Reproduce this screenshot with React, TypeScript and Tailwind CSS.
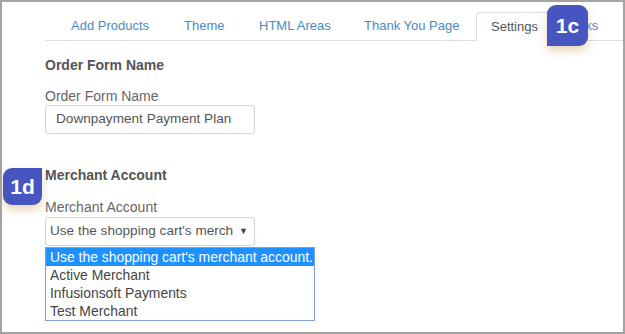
import React from "react";

const tabs: Array<{ label: string; width: string; active?: boolean }> = [
  { label: "Add Products", width: "w-[113px]" },
  { label: "Theme", width: "w-[75px]" },
  { label: "HTML Areas", width: "w-[105px]" },
  { label: "Thank You Page", width: "w-[127px]" },
  { label: "Settings", width: "w-[77px]", active: true },
  { label: "Links", width: "w-[70px]" }
];

const options = [
  "Use the shopping cart's merchant account.",
  "Active Merchant",
  "Infusionsoft Payments",
  "Test Merchant"
];

function Badge({ text, className }: { text: string; className: string }) {
  return (
    <div
      className={`absolute flex items-center justify-center bg-[#4655bf] text-white font-bold text-[21px] shadow-[0_5px_8px_rgba(190,140,60,0.35)] ${className}`}
    >
      {text}
    </div>
  );
}

export default function App() {
  return (
    <div
      className="relative w-[625px] h-[334px] border-2 border-[#a3a3a3] bg-white overflow-hidden"
      style={{ fontFamily: '"Liberation Sans", Arial, sans-serif' }}
    >
      <div className="pl-[43px] pt-[10px]">
        {/* tab strip */}
        <div className="flex h-[29px] border-b border-[#dddddd] pl-[11px]">
          {tabs.map((tab) =>
            tab.active ? (
              <div
                key={tab.label}
                className={`${tab.width} flex-shrink-0 h-[29px] pl-[14px] pt-[4px] text-[13px] text-[#555555] bg-white border border-b-0 border-[#dddddd] rounded-t-[4px]`}
              >
                {tab.label}
              </div>
            ) : (
              <div
                key={tab.label}
                className={`${tab.width} flex-shrink-0 pl-[15px] pt-[4px] text-[13px] text-[#4a8ac6]`}
              >
                {tab.label}
              </div>
            )
          )}
        </div>

        {/* order form name */}
        <div className="mt-[15px] text-[14px] leading-[18px] font-bold text-[#555555]">Order Form Name</div>
        <div className="mt-[14px] text-[14px] leading-[17px] text-[#666666]">Order Form Name</div>
        <div className="w-[210px] h-[29px] border border-[#d4d4d4] rounded-[3px] flex items-center pl-[10px] text-[13.6px] text-[#555555]">
          Downpayment Payment Plan
        </div>

        {/* merchant account */}
        <div className="mt-[32px] text-[14px] leading-[18px] font-bold text-[#555555]">Merchant Account</div>
        <div className="mt-[15px] text-[14px] leading-[17px] text-[#666666]">Merchant Account</div>
        <div className="mt-[1px] w-[210px] h-[29px] border border-[#d4d4d4] rounded-[3px] flex items-center pl-[4px] pr-[6px] text-[13.6px] text-[#555555]">
          <span className="flex-1 whitespace-nowrap overflow-hidden">Use the shopping cart's merch</span>
          <span className="ml-[4px] text-[9px] text-[#444444]">▼</span>
        </div>
        <div className="mt-[1px] w-[270px] border border-[#7f9ee0] bg-white">
          {options.map((opt, i) => (
            <div
              key={opt}
              className={`h-[18px] leading-[18px] pl-[4px] text-[13.9px] whitespace-nowrap ${
                i === 0 ? "bg-[#1e90ff] text-white" : "text-[#444444]"
              }`}
            >
              {opt}
            </div>
          ))}
        </div>
      </div>

      <Badge text="1c" className="left-[545px] top-[3px] w-[41px] h-[41px] rounded-[9px] rounded-bl-none" />
      <Badge text="1d" className="left-[1px] top-[166px] w-[39px] h-[37px] rounded-[9px] rounded-tr-none" />
    </div>
  );
}
